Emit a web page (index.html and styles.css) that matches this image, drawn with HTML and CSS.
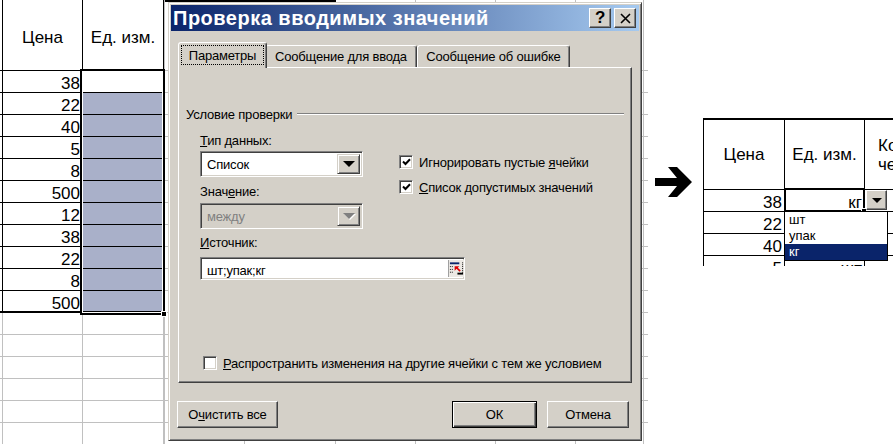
FILE: index.html
```html
<!DOCTYPE html>
<html lang="ru">
<head>
    <meta charset="UTF-8">
    <meta name="viewport" content="width=device-width, initial-scale=1.0">
    <title>Проверка вводимых значений</title>
    <link rel="stylesheet" href="styles.css">
</head>
<body>
    <div class="screen">
        <!-- лист слева: выделенный диапазон -->
        <div class="sheet-left">
            <div class="xl">
                <div class="cell stub head"></div><div class="cell head">Цена</div><div class="cell head">Ед. изм.</div>
                <div class="cell stub"></div><div class="cell num">38</div><div class="cell"></div>
                <div class="cell stub"></div><div class="cell num">22</div><div class="cell sel"></div>
                <div class="cell stub"></div><div class="cell num">40</div><div class="cell sel"></div>
                <div class="cell stub"></div><div class="cell num">5</div><div class="cell sel"></div>
                <div class="cell stub"></div><div class="cell num">8</div><div class="cell sel"></div>
                <div class="cell stub"></div><div class="cell num">500</div><div class="cell sel"></div>
                <div class="cell stub"></div><div class="cell num">12</div><div class="cell sel"></div>
                <div class="cell stub"></div><div class="cell num">38</div><div class="cell sel"></div>
                <div class="cell stub"></div><div class="cell num">22</div><div class="cell sel"></div>
                <div class="cell stub"></div><div class="cell num">8</div><div class="cell sel"></div>
                <div class="cell stub last"></div><div class="cell num last">500</div><div class="cell sel last"></div>
                <div class="cell stub empty"></div><div class="cell empty"></div><div class="cell empty"></div>
                <div class="cell stub empty"></div><div class="cell empty"></div><div class="cell empty"></div>
                <div class="cell stub empty"></div><div class="cell empty"></div><div class="cell empty"></div>
                <div class="cell stub empty"></div><div class="cell empty"></div><div class="cell empty"></div>
                <div class="cell stub empty"></div><div class="cell empty"></div><div class="cell empty"></div>
                <div class="cell stub empty"></div><div class="cell empty"></div><div class="cell empty"></div>
            </div>
            <div class="sel-box"><span class="handle"></span></div>
        </div>

        <!-- окно диалога поверх листа -->
        <div class="desk">
            <div class="dlg">
                <div class="title">
                    <span class="title-text">Проверка вводимых значений</span>
                    <span class="tbtn help">?</span>
                    <span class="tbtn close">
                        <svg width="11" height="11" viewBox="0 0 11 11"><path d="M1 1L10 10M10 1L1 10" stroke="#000" stroke-width="1.6"/></svg>
                    </span>
                </div>
                <div class="dlg-body">
                    <div class="tabs">
                        <div class="tab active"><span class="focus">Параметры</span></div>
                        <div class="tab t2">Сообщение для ввода</div>
                        <div class="tab t3">Сообщение об ошибке</div>
                    </div>
                    <div class="panel">
                        <div class="legend">
                            <span>Условие проверки</span>
                            <span class="etch"></span>
                        </div>
                        <div class="cond">
                            <div class="cond-top">
                                <div class="col-left">
                                    <div class="lbl"><u>Т</u>ип данных:</div>
                                    <div class="combo">
                                        <span class="combo-text">Список</span>
                                        <span class="combo-btn"><i class="tri"></i></span>
                                    </div>
                                    <div class="lbl lbl-2">Знач<u>е</u>ние:</div>
                                    <div class="combo off">
                                        <span class="combo-text">между</span>
                                        <span class="combo-btn"><i class="tri"></i></span>
                                    </div>
                                </div>
                                <div class="col-right">
                                    <div class="chk-row">
                                        <span class="chk"><svg width="9" height="8" viewBox="0 0 9 8"><path d="M1 3.5L3.5 6L8 1.2" stroke="#000" stroke-width="2" fill="none"/></svg></span>
                                        <span>Игнорировать пустые <u>я</u>чейки</span>
                                    </div>
                                    <div class="chk-row">
                                        <span class="chk"><svg width="9" height="8" viewBox="0 0 9 8"><path d="M1 3.5L3.5 6L8 1.2" stroke="#000" stroke-width="2" fill="none"/></svg></span>
                                        <span><u>С</u>писок допустимых значений</span>
                                    </div>
                                </div>
                            </div>
                            <div class="lbl lbl-3"><u>И</u>сточник:</div>
                            <div class="source">
                                <span class="source-text">шт;упак;кг</span>
                                <span class="pick">
                                    <svg width="16" height="16" viewBox="0 0 16 16">
                                        <rect x="1" y="2" width="10" height="2" fill="#0a246a"/>
                                        <path d="M1 6.5h4M1 9.5h4M1 12.5h4" stroke="#000" stroke-dasharray="1 1"/>
                                        <path d="M14.5 2v11" stroke="#000" stroke-dasharray="1 1"/>
                                        <path d="M6 6L11 6L9.4 7.6L12.5 10.7L11.2 12L8.1 8.9L6 11Z" fill="#e00000"/>
                                        <rect x="9" y="13" width="6" height="2" fill="#000"/>
                                    </svg>
                                </span>
                            </div>
                        </div>
                        <div class="chk-row spread">
                            <span class="chk"></span>
                            <span><u>Р</u>аспространить изменения на другие ячейки с тем же условием</span>
                        </div>
                    </div>
                    <div class="footer">
                        <span class="btn clear">О<u>ч</u>истить все</span>
                        <span class="btn ok">ОК</span>
                        <span class="btn cancel">Отмена</span>
                    </div>
                </div>
            </div>
        </div>

        <div class="arrow">
            <svg width="37" height="30" viewBox="0 0 37 30"><path d="M0 11H22L13 0H22L37 15L22 30H13L22 19H0Z" fill="#000"/></svg>
        </div>

        <!-- результат: выпадающий список в ячейке -->
        <div class="sheet-right">
            <div class="xr">
                <div class="cell head">Цена</div><div class="cell head">Ед. изм.</div><div class="cell head h3">Кол-во<br>человек</div>
                <div class="cell num">38</div><div class="cell num">кг</div><div class="cell"></div>
                <div class="cell num">22</div><div class="cell"></div><div class="cell"></div>
                <div class="cell num">40</div><div class="cell"></div><div class="cell"></div>
                <div class="cell num">5</div><div class="cell num">шт</div><div class="cell"></div>
            </div>
            <div class="active-cell"><span class="handle"></span></div>
            <span class="drop-btn"><i class="tri"></i></span>
            <ul class="drop-list">
                <li>шт</li>
                <li>упак</li>
                <li class="hl">кг</li>
            </ul>
        </div>
    </div>
</body>
</html>
```

FILE: styles.css
```css
*{
    box-sizing: border-box;
}
body{
    margin: 0;
    background: #fff;
    font-family: "Liberation Sans", Arial, sans-serif;
    color: #000;
}
.screen{
    display: flex;
    width: 893px;
    height: 444px;
    overflow: hidden;
}

/* --- листы Excel --- */
.sheet-left{
    position: relative;
    width: 164px;
    flex: none;
}
.xl{
    display: grid;
    grid-template-columns: 3px 80px 81px;
    grid-template-rows: 71px;
    grid-auto-rows: 22px;
}
.cell{
    border-right: 1px solid #000;
    border-bottom: 1px solid #000;
    font-size: 17px;
    line-height: 21px;
    white-space: nowrap;
}
.head{
    display: flex;
    align-items: center;
    justify-content: center;
    text-align: center;
}
.xl .head{
    padding-top: 5px;
}
.num{
    text-align: right;
    padding-right: 2px;
    line-height: 25px;
}
.sel{
    background: #a9b0c9;
}
.last{
    border-bottom-width: 2px;
}
.empty{
    border-color: #c0c0c0;
}
.sel-box{
    position: absolute;
    left: 80px;
    top: 69px;
    width: 85px;
    height: 246px;
    border: 2px solid #000;
    box-shadow: inset 0 0 0 1px #fff;
}
.handle{
    position: absolute;
    right: -4px;
    bottom: -4px;
    width: 6px;
    height: 6px;
    background: #000;
    border: 1px solid #fff;
}

.desk{
    width: 484px;
    height: 444px;
    flex: none;
    background:
        linear-gradient(#000, #000) 1px 0 / 171px 2px no-repeat,
        linear-gradient(90deg, #c0c0c0 0 1px, transparent 1px 80px, #c0c0c0 80px 81px, transparent 81px 171px, #c0c0c0 171px 172px, transparent 172px 251px, #c0c0c0 251px 252px, transparent 252px 331px, #c0c0c0 331px 332px, transparent 332px 411px, #c0c0c0 411px 412px, transparent 412px 479px, #c0c0c0 479px 480px, transparent 480px),
        repeating-linear-gradient(#c0c0c0 0 1px, transparent 1px 22px) 0 70px / 100% 374px no-repeat,
        #fff;
}

/* --- диалог --- */
.dlg{
    margin: 2px 0 0 4px;
    width: 474px;
    height: 439px;
    background: #d4d0c8;
    border: 1px solid;
    border-color: #d4d0c8 #404040 #404040 #d4d0c8;
    box-shadow: inset 1px 1px #fff, inset -1px -1px #808080;
    padding: 2px;
    font-size: 13px;
    letter-spacing: -0.2px;
}
.title{
    display: flex;
    align-items: center;
    height: 26px;
    padding-left: 2px;
    background: linear-gradient(90deg, #0a246a, #a6caf0);
}
.title-text{
    flex: 1;
    color: #fff;
    font-weight: bold;
    font-size: 20px;
    letter-spacing: 0.5px;
}
.tbtn{
    display: flex;
    align-items: center;
    justify-content: center;
    width: 22px;
    height: 20px;
    margin-right: 3px;
    background: #d4d0c8;
    border: 1px solid;
    border-color: #fff #404040 #404040 #fff;
    box-shadow: inset -1px -1px #808080;
}
.help{
    font-weight: bold;
    font-size: 17px;
}
.dlg-body{
    padding: 11px 7px 0;
}
.tabs{
    display: flex;
    align-items: flex-end;
    height: 25px;
}
.tab{
    display: flex;
    align-items: center;
    justify-content: center;
    height: 22px;
    background: #d4d0c8;
    border: 1px solid;
    border-bottom: none;
    border-color: #fff #404040 transparent #fff;
    border-radius: 3px 3px 0 0;
    box-shadow: inset -1px 0 #808080;
}
.tab.active{
    position: relative;
    z-index: 1;
    width: 89px;
    height: 26px;
    margin: 0 -2px -1px 0;
    padding: 2px 2px 3px 2px;
}
.focus{
    display: flex;
    align-items: center;
    justify-content: center;
    width: 100%;
    height: 100%;
    border: 1px dotted #000;
}
.t2{
    width: 152px;
}
.t3{
    width: 153px;
}
.panel{
    display: flex;
    flex-direction: column;
    width: 454px;
    height: 316px;
    border: 1px solid;
    border-color: #fff #404040 #404040 #fff;
    box-shadow: inset -1px -1px #808080;
}
.legend{
    display: flex;
    align-items: center;
    height: 16px;
    margin-top: 38px;
    padding: 0 7px;
}
.etch{
    flex: 1;
    margin-left: 5px;
    border-top: 1px solid #808080;
    border-bottom: 1px solid #fff;
}
.cond{
    margin-top: 11px;
    padding-left: 21px;
}
.cond-top{
    display: flex;
}
.col-left{
    width: 163px;
}
.lbl{
    height: 16px;
    line-height: 16px;
    margin-bottom: 2px;
}
.lbl-2{
    margin-top: 7px;
    margin-bottom: 3px;
}
.lbl-3{
    margin-top: 6px;
    margin-bottom: 6px;
}
.combo, .source{
    display: flex;
    align-items: stretch;
    height: 26px;
    background: #fff;
    border: 1px solid;
    border-color: #808080 #fff #fff #808080;
    box-shadow: inset 1px 1px #404040, inset -1px -1px #d4d0c8;
    padding: 2px;
}
.combo-text, .source-text{
    flex: 1;
    padding-left: 4px;
    line-height: 22px;
}
.combo-btn{
    display: flex;
    align-items: center;
    justify-content: center;
    width: 23px;
    background: #d4d0c8;
    border: 1px solid;
    border-color: #d4d0c8 #404040 #404040 #d4d0c8;
    box-shadow: inset 1px 1px #fff, inset -1px -1px #808080;
}
.tri{
    width: 0;
    height: 0;
    border-left: 6px solid transparent;
    border-right: 6px solid transparent;
    border-top: 6px solid #000;
}
.combo.off{
    background: #d4d0c8;
    color: #808080;
}
.combo.off .tri{
    border-top-color: #808080;
    filter: drop-shadow(1px 1px 0 #fff);
}
.col-right{
    margin-left: 36px;
    padding-top: 22px;
}
.chk-row{
    display: flex;
    align-items: center;
    height: 14px;
    margin-bottom: 11px;
    white-space: nowrap;
}
.chk{
    display: flex;
    align-items: center;
    justify-content: center;
    width: 14px;
    height: 14px;
    margin-right: 6px;
    background: #fff;
    border: 1px solid;
    border-color: #808080 #fff #fff #808080;
    box-shadow: inset 1px 1px #404040, inset -1px -1px #d4d0c8;
}
.source{
    width: 265px;
    height: 23px;
    padding-right: 0;
}
.pick{
    display: flex;
    width: 16px;
    height: 17px;
    background: #ece9e4;
    border-left: 1px solid #a0a0a0;
}
.chk-row.spread{
    margin: auto 0 12px 24px;
}
.footer{
    display: flex;
    margin-top: 18px;
}
.btn{
    display: flex;
    align-items: center;
    justify-content: center;
    height: 27px;
    background: #d4d0c8;
    border: 1px solid;
    border-color: #fff #404040 #404040 #fff;
    box-shadow: inset -1px -1px #808080;
}
.clear{
    width: 101px;
    margin-left: -1px;
}
.ok{
    width: 85px;
    margin-left: auto;
    border-color: #000;
    box-shadow: inset 1px 1px #fff, inset -1px -1px #404040, inset -2px -2px #808080;
}
.cancel{
    width: 82px;
    margin: 0 3px 0 10px;
}

/* --- стрелка и результат --- */
.arrow{
    width: 55px;
    flex: none;
    padding: 167px 0 0 7px;
}
.sheet-right{
    position: relative;
    flex: 1;
    height: 148px;
    margin-top: 118px;
    overflow: hidden;
}
.xr{
    display: grid;
    grid-template-columns: 81px 80px 80px;
    grid-template-rows: 70px;
    grid-auto-rows: 22px;
    border-top: 2px solid #000;
    border-left: 1px solid #000;
}
.h3{
    justify-content: flex-start;
    text-align: left;
    padding-left: 13px;
    line-height: 19px;
}
.active-cell{
    position: absolute;
    left: 81px;
    top: 70px;
    width: 81px;
    height: 24px;
    border: 2px solid #000;
}
.drop-btn{
    position: absolute;
    left: 163px;
    top: 72px;
    display: flex;
    align-items: center;
    justify-content: center;
    width: 21px;
    height: 20px;
    background: #d4d0c8;
    border: 1px solid;
    border-color: #fff #404040 #404040 #fff;
    box-shadow: inset -1px -1px #808080;
}
.drop-btn .tri{
    border-width: 5px 5px 0;
}
.drop-list{
    position: absolute;
    left: 81px;
    top: 93px;
    width: 104px;
    height: 50px;
    margin: 0;
    padding: 0;
    list-style: none;
    background: #fff;
    border: 1px solid #000;
    font-size: 13px;
}
.drop-list li{
    height: 16px;
    line-height: 16px;
    padding-left: 4px;
}
.drop-list .hl{
    background: #0a246a;
    color: #fff;
}
```
